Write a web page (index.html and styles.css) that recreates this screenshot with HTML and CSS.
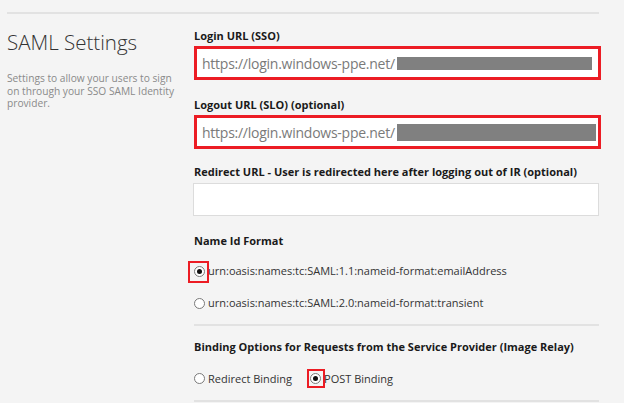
FILE: index.html
```html
<!DOCTYPE html>
<html>
<head>
<meta charset="utf-8">
<link rel="stylesheet" href="styles.css">
</head>
<body>
<div class="page">
  <div class="rule top-rule"></div>
  <div class="main">
    <div class="left">
      <h1 class="title">SAML Settings</h1>
      <p class="desc">Settings to allow your users to sign on through your SSO SAML Identity provider.</p>
    </div>
    <div class="right">
      <div class="label first">Login URL (SSO)</div>
      <div class="input marked"><span class="url">https://login.windows-ppe.net/</span><span class="redact"></span></div>

      <div class="label">Logout URL (SLO) (optional)</div>
      <div class="input marked"><span class="url">https://login.windows-ppe.net/</span><span class="redact wide"></span></div>

      <div class="label mid">Redirect URL - User is redirected here after logging out of IR (optional)</div>
      <div class="input plain"></div>

      <div class="label">Name Id Format</div>
      <div class="radio-row r1">
        <span class="radio checked"><span class="mark-box big"></span></span>
        <span class="rtext">urn:oasis:names:tc:SAML:1.1:nameid-format:emailAddress</span>
      </div>
      <div class="radio-row r2">
        <span class="radio"></span>
        <span class="rtext">urn:oasis:names:tc:SAML:2.0:nameid-format:transient</span>
      </div>

      <div class="rule sep"></div>

      <div class="label bind">Binding Options for Requests from the Service Provider (Image Relay)</div>
      <div class="radio-row r3">
        <span class="opt">
          <span class="radio"></span>
          <span class="rtext">Redirect Binding</span>
        </span>
        <span class="opt">
          <span class="radio checked"><span class="mark-box small"></span></span>
          <span class="rtext">POST Binding</span>
        </span>
      </div>
      <div class="rule bottom-rule"></div>
    </div>
  </div>
</div>
</body>
</html>
```

FILE: styles.css
```css
html, body {
  margin: 0;
  padding: 0;
  background: #f4f4f4;
}
body {
  font-family: "Open Sans", "DejaVu Sans", sans-serif;
  color: #222;
  width: 624px;
  height: 403px;
  overflow: hidden;
}
.page {
  padding-top: 12px;
}
.rule {
  height: 2px;
  background: #e2e2e2;
}
.top-rule {
  margin-left: 7px;
  width: 592px;
}
.main {
  display: flex;
  padding-left: 7px;
}
.left {
  width: 187px;
  flex: none;
}
.title {
  margin: 13px 0 0 0;
  font-size: 20.5px;
  font-weight: 300;
  line-height: 30px;
  color: #333;
}
.desc {
  margin: 15px 0 0 0;
  font-size: 10.2px;
  line-height: 12.5px;
  color: #8a8a8a;
  width: 172px;
}
.right {
  width: 407px;
  flex: none;
  padding-top: 15px;
}
.label {
  font-size: 11px;
  font-weight: 700;
  line-height: 14px;
  color: #1a1a1a;
  margin-top: 18px;
  white-space: nowrap;
}
.label.first { margin-top: 0; }
.label.mid { margin-top: 16px; }
.label.bind { margin-top: 14px; }
.input {
  box-sizing: border-box;
  background: #fff;
  display: flex;
  align-items: center;
  white-space: nowrap;
}
.input.marked {
  margin-top: 3px;
  height: 34px;
  border: 3px solid #ec1c24;
  padding-left: 5px;
}
.input.plain {
  margin-top: 4px;
  height: 33px;
  width: 406px;
  margin-left: -1px;
  border: 1px solid #dcdcdc;
}
.url {
  flex: none;
  font-size: 14px;
  color: #7a7a7a;
  font-family: "Open Sans", sans-serif;
  letter-spacing: -0.25px;
}
.redact {
  flex: none;
  display: inline-block;
  height: 13px;
  width: 195px;
  margin-left: 2px;
  background: #808080;
}
.redact.wide {
  height: 17px;
  width: 199px;
}
.radio-row {
  display: flex;
  align-items: center;
  height: 20px;
}
.r1 { margin-top: 13px; }
.r2 { margin-top: 12px; }
.r3 { margin-top: 14.5px; }
.opt {
  display: flex;
  align-items: center;
}
.opt + .opt { margin-left: 18px; }
.radio {
  position: relative;
  box-sizing: border-box;
  width: 11px;
  height: 11px;
  border: 1px solid #7a7a7a;
  border-radius: 50%;
  background: #fff;
  flex: none;
}
.radio.checked::after {
  content: "";
  position: absolute;
  left: 2px;
  top: 2px;
  width: 5px;
  height: 5px;
  border-radius: 50%;
  background: #111;
}
.mark-box {
  position: absolute;
  border: 2px solid #ec1c24;
  box-sizing: border-box;
}
.mark-box.big {
  left: -7px;
  top: -6px;
  width: 21px;
  height: 22px;
}
.mark-box.small {
  left: -4px;
  top: -5px;
  width: 18px;
  height: 19px;
}
.rtext {
  margin-left: 3px;
  font-size: 11px;
  color: #333;
  line-height: 14px;
}
.sep {
  margin-top: 11px;
  width: 405px;
}
.bottom-rule {
  margin-top: 11.5px;
  width: 405px;
}
```
